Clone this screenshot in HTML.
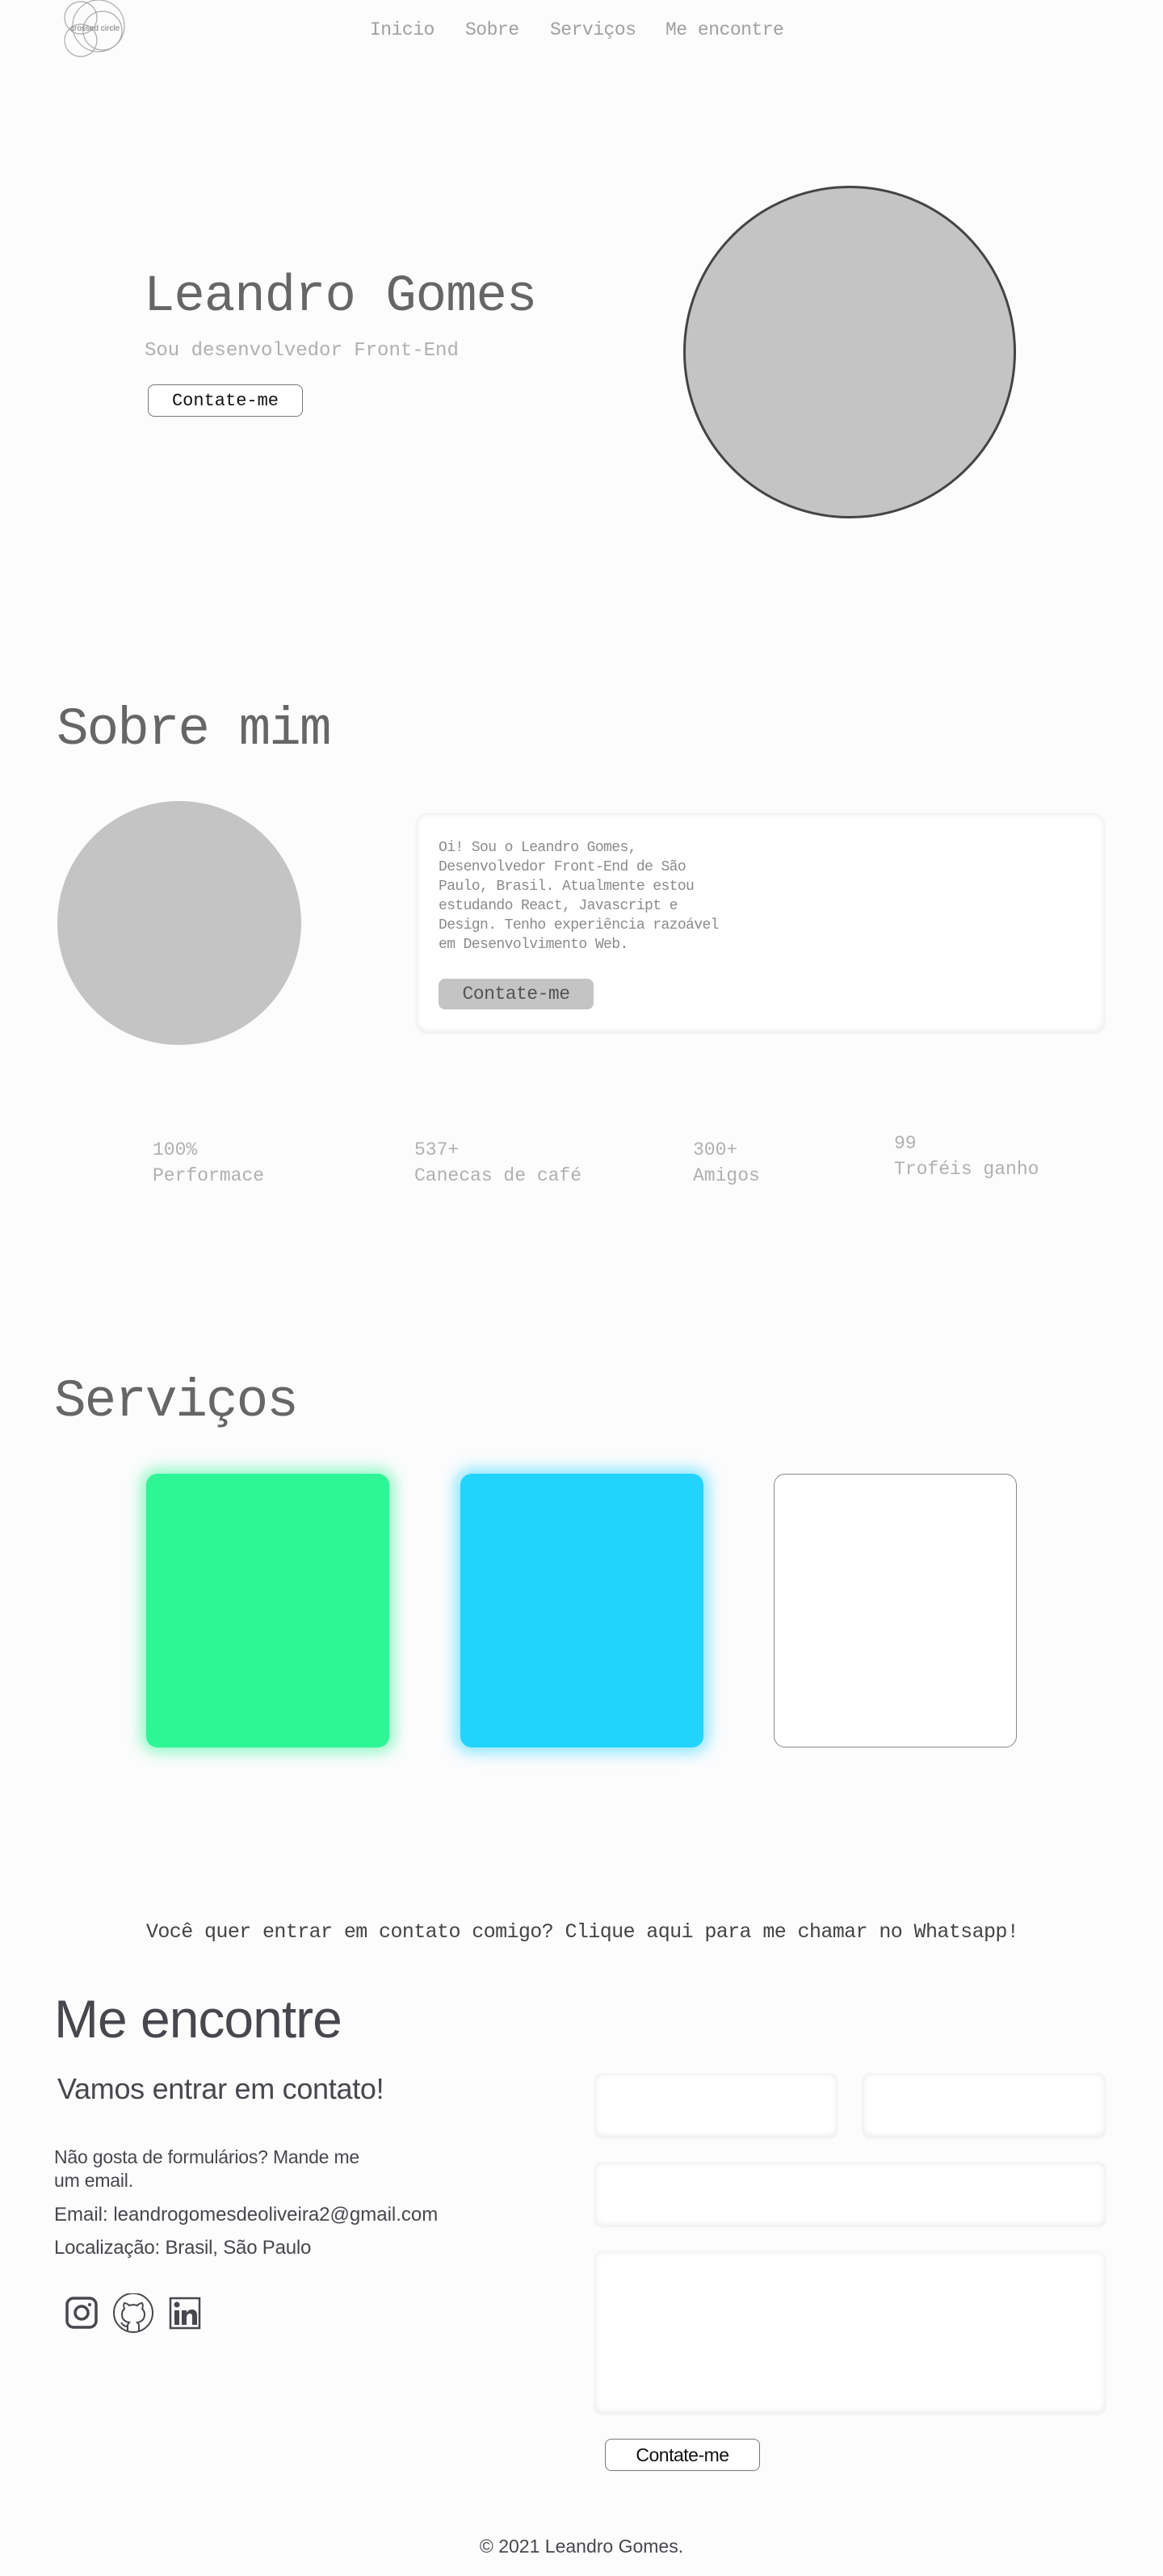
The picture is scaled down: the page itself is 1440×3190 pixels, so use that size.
<!DOCTYPE html>
<html><head><meta charset="utf-8"><style>
*{margin:0;padding:0;box-sizing:border-box}
body{width:1440px;height:3190px;background:#fcfcfd;position:relative;overflow:hidden;font-family:"Liberation Mono",monospace}
.a{position:absolute;white-space:nowrap}
.sans{font-family:"Liberation Sans",sans-serif}
.nav{top:24px;font-size:23px;color:#a0a0a0;letter-spacing:-0.5px}
.btn{position:absolute;border:1.5px solid #777;border-radius:8px;background:#fff;display:flex;align-items:center;justify-content:center;color:#111}
.card{position:absolute;border-radius:14px;background:#fff;box-shadow:inset 0 0 7px 2px rgba(0,0,0,0.07),0 2px 3px rgba(0,0,0,0.06)}
.stat{font-size:23px;color:#b0b0b0;line-height:32px;letter-spacing:0}
</style></head><body>
<svg class="a" style="left:70px;top:0" width="100" height="75" viewBox="70 0 100 75" fill="none" stroke="#aaa" stroke-width="1.2">
<circle cx="100" cy="22" r="20"/><circle cx="122" cy="32" r="32"/><circle cx="127" cy="38" r="24"/><circle cx="100" cy="50" r="20"/>
<text x="87" y="38" font-family="Liberation Sans,sans-serif" font-size="10" fill="#777" stroke="none">crossed circle</text>
</svg>
<div class="a nav" style="left:458px">Inicio</div>
<div class="a nav" style="left:576px">Sobre</div>
<div class="a nav" style="left:681px">Serviços</div>
<div class="a nav" style="left:824px">Me encontre</div>

<div class="a" style="left:178px;top:332px;font-size:64px;color:#666;letter-spacing:-1px">Leandro Gomes</div>
<div class="a" style="left:179px;top:421px;font-size:24px;color:#b0b0b0;letter-spacing:0">Sou desenvolvedor Front-End</div>
<div class="btn" style="left:183px;top:476px;width:192px;height:40px;font-size:22px">Contate-me</div>
<div class="a" style="left:846px;top:230px;width:412px;height:412px;border-radius:50%;background:#c4c4c4;border:3px solid #444"></div>

<div class="a" style="left:70px;top:866px;font-size:66px;color:#666;letter-spacing:-2px">Sobre mim</div>
<div class="a" style="left:71px;top:992px;width:302px;height:302px;border-radius:50%;background:#c4c4c4"></div>
<div class="card" style="left:515px;top:1007px;width:853px;height:271px"></div>
<div class="a" style="left:543px;top:1038px;font-size:18px;line-height:24px;color:#8a8a8a;letter-spacing:-0.6px;white-space:pre">Oi! Sou o Leandro Gomes,
Desenvolvedor Front-End de São
Paulo, Brasil. Atualmente estou
estudando React, Javascript e
Design. Tenho experiência razoável
em Desenvolvimento Web.</div>
<div class="a" style="left:543px;top:1212px;width:192px;height:38px;border-radius:8px;background:#c4c4c4;color:#555;font-size:23px;display:flex;align-items:center;justify-content:center;letter-spacing:-0.5px">Contate-me</div>

<div class="a stat" style="left:189px;top:1408px">100%<br>Performace</div>
<div class="a stat" style="left:513px;top:1408px">537+<br>Canecas de café</div>
<div class="a stat" style="left:858px;top:1408px">300+<br>Amigos</div>
<div class="a stat" style="left:1107px;top:1400px">99<br>Troféis ganho</div>

<div class="a" style="left:67px;top:1698px;font-size:66px;color:#666;letter-spacing:-2px">Serviços</div>
<div class="a" style="left:181px;top:1825px;width:301px;height:339px;border-radius:14px;background:#2ef596;box-shadow:0 0 18px 6px rgba(46,245,150,0.55)"></div>
<div class="a" style="left:570px;top:1825px;width:301px;height:339px;border-radius:14px;background:#22d4fd;box-shadow:0 0 18px 6px rgba(34,212,253,0.55)"></div>
<div class="a" style="left:958px;top:1825px;width:301px;height:339px;border-radius:14px;background:#fff;border:1.5px solid #888"></div>

<div class="a" style="left:181px;top:2378px;font-size:25px;color:#444;letter-spacing:-0.6px">Você quer entrar em contato comigo? Clique aqui para me chamar no Whatsapp!</div>

<div class="a sans" style="left:67px;top:2462px;font-size:66px;color:#47474d;letter-spacing:-1px">Me encontre</div>
<div class="a sans" style="left:71px;top:2566px;font-size:36px;color:#47474d;letter-spacing:-0.3px">Vamos entrar em contato!</div>
<div class="a sans" style="left:67px;top:2657px;font-size:23px;line-height:29px;color:#47474d;letter-spacing:-0.2px">Não gosta de formulários? Mande me<br>um email.</div>
<div class="a sans" style="left:67px;top:2729px;font-size:24px;color:#47474d;letter-spacing:0">Email: leandrogomesdeoliveira2@gmail.com</div>
<div class="a sans" style="left:67px;top:2770px;font-size:24px;color:#47474d;letter-spacing:-0.2px">Localização: Brasil, São Paulo</div>

<svg class="a" style="left:80px;top:2840px" width="175" height="52" viewBox="80 2840 175 52" fill="none" stroke="#47474d">
<rect x="83" y="2846" width="36" height="36" rx="8" stroke-width="3.5"/><circle cx="101" cy="2864" r="8" stroke-width="3.5"/><circle cx="111" cy="2854" r="2" fill="#47474d" stroke="none"/>
<circle cx="165" cy="2864" r="24" stroke-width="2"/>
<path d="M158 2887v-6c-4 0-6-2-8-5M172 2887v-7c0-2-1-3-2-4 6-1 9-4 9-10 0-3-1-5-3-7 1-2 1-5 0-7-2 0-4 1-6 3-3-1-7-1-10 0-2-2-4-3-6-3-1 2-1 5 0 7-2 2-3 4-3 7 0 6 3 9 9 10-1 1-2 2-2 4" stroke-width="2"/>
<rect x="211" y="2846" width="36" height="37" stroke-width="2.5"/>
<rect x="216" y="2861" width="6" height="18" fill="#47474d" stroke="none"/><circle cx="219" cy="2854" r="3.5" fill="#47474d" stroke="none"/>
<path d="M225 2861h6v3c2-3 4-4 7-4 4 0 6 3 6 8v11h-6v-10c0-3-1-4-3-4s-4 2-4 5v9h-6z" fill="#47474d" stroke="none"/>
</svg>

<div class="card" style="left:736px;top:2567px;width:301px;height:79px;border-radius:10px"></div>
<div class="card" style="left:1068px;top:2567px;width:301px;height:79px;border-radius:10px"></div>
<div class="card" style="left:736px;top:2677px;width:633px;height:79px;border-radius:10px"></div>
<div class="card" style="left:736px;top:2787px;width:633px;height:201px;border-radius:10px"></div>
<div class="btn sans" style="left:749px;top:3020px;width:192px;height:40px;font-size:23px;letter-spacing:-0.5px">Contate-me</div>

<div class="a sans" style="left:0;width:1440px;text-align:center;top:3140px;font-size:23px;color:#47474d;letter-spacing:0">© 2021 Leandro Gomes.</div>
</body></html>
